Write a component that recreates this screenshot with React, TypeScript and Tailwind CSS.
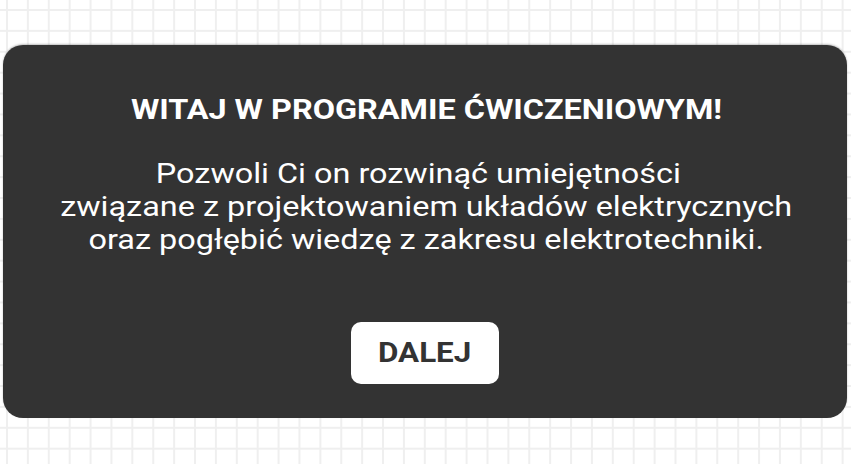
import React from 'react'

const gridBg =
    'bg-white bg-[linear-gradient(to_right,#efefef_1.5px,transparent_1.5px),linear-gradient(to_bottom,#efefef_1.5px,transparent_1.5px)] bg-[size:20.9px_20.9px] bg-[position:6px_9px]'

export default function App() {
    return (
        <div className={`w-[851px] h-[464px] overflow-hidden pt-[45px] ${gridBg}`} style={{ fontFamily: 'Roboto, "Noto Sans", sans-serif' }}>
            <div className="ml-[3px] w-[844px] h-[373px] rounded-[20px] bg-[#333333] shadow-[0_-1px_2px_rgba(0,0,0,0.25)] flex flex-col items-center pt-[49px]">
                <h1 className="pl-[2px] scale-x-[1.2] text-white font-bold text-[27px] leading-[32px] text-center">
                    WITAJ W PROGRAMIE ĆWICZENIOWYM!
                </h1>
                <p className="mt-[32px] pl-[2px] scale-x-[1.2] text-white text-[27px] leading-[33px] text-center">
                    Pozwoli Ci on rozwinąć umiejętności<span className="inline-block w-[13px]" />
                    <br />
                    związane z projektowaniem układów elektrycznych
                    <br />
                    oraz pogłębić wiedzę z zakresu elektrotechniki.
                </p>
                <button className="mt-[65px] w-[148px] h-[62px] rounded-[10px] bg-white flex items-center justify-center">
                    <span className="scale-x-[1.12] text-[#333333] font-bold text-[28px] leading-none">DALEJ</span>
                </button>
            </div>
        </div>
    )
}
